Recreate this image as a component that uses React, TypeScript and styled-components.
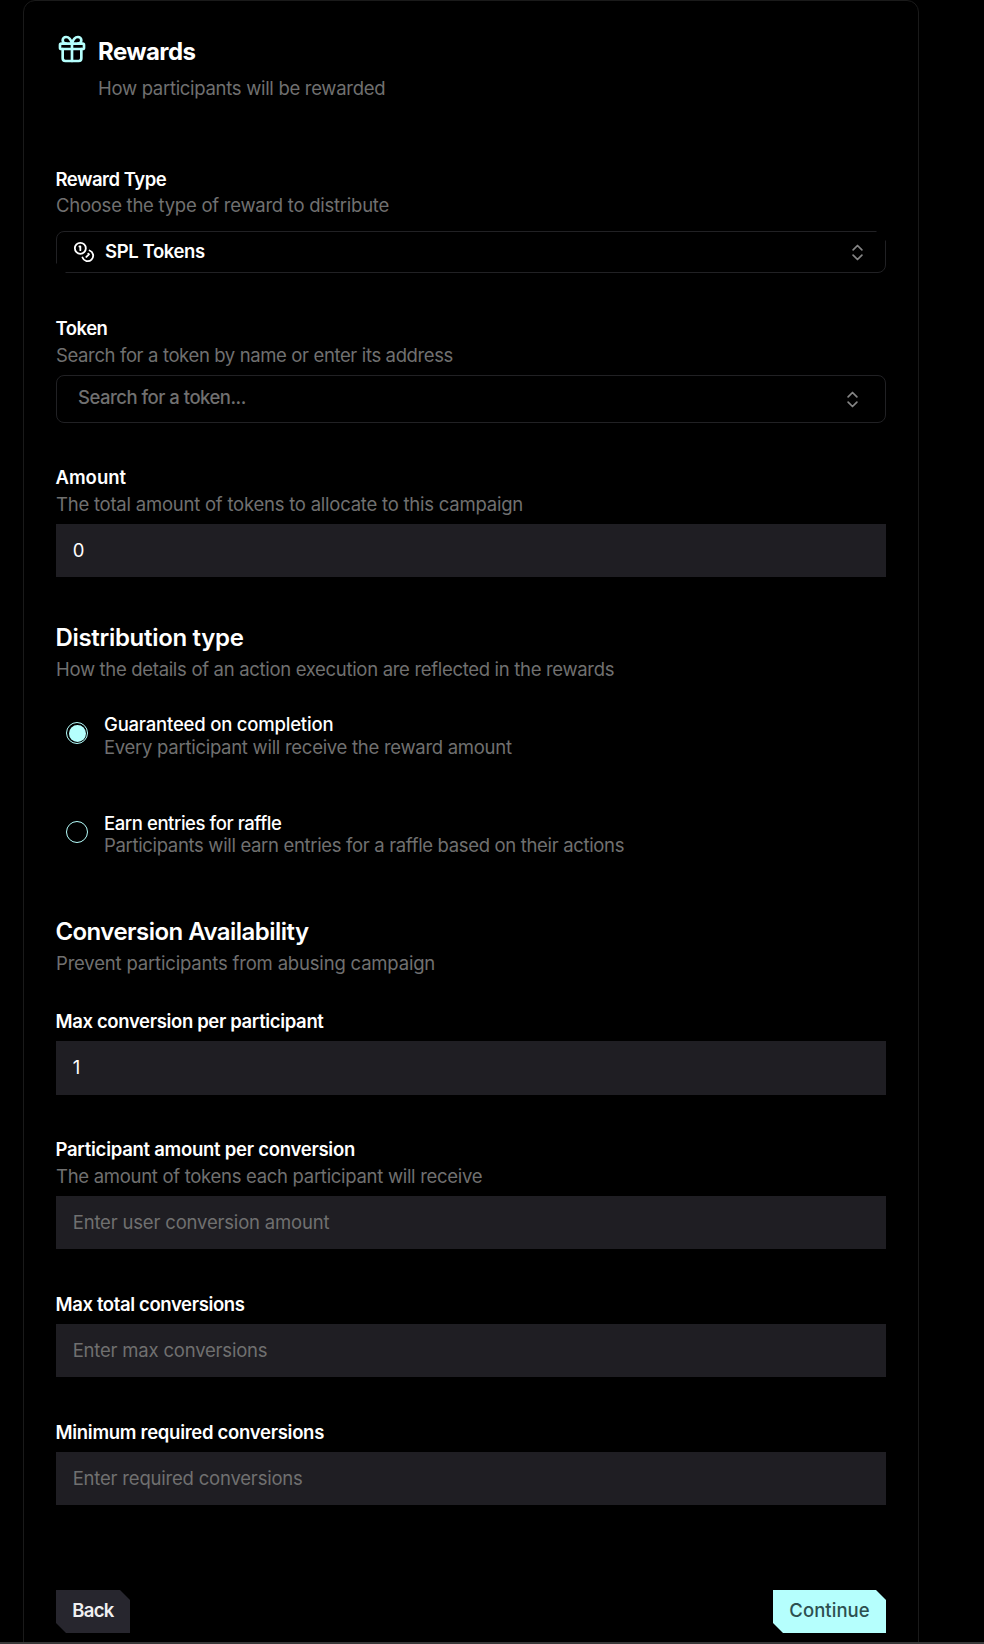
import React, { useState } from 'react';
import styled, { createGlobalStyle } from 'styled-components';
import { ChevronsUpDown, Coins, Gift } from 'lucide-react';

const GlobalStyle = createGlobalStyle`
  * { box-sizing: border-box; }
  body {
    margin: 0;
    background: #000;
    color: #fff;
    font-family: Inter, "Liberation Sans", sans-serif;
    font-size: 18.5px;
    -webkit-font-smoothing: antialiased;
  }
`;

const accent = '#b5fffd';
const muted = '#707070';
const notch = `polygon(
  0 0, calc(100% - 10px) 0, 100% 10px,
  100% 100%, 10px 100%, 0 calc(100% - 10px)
)`;

const Page = styled.div`
  height: 1644px;
  padding-left: 23px;
  overflow: hidden;
`;

const Card = styled.form`
  display: flex;
  flex-direction: column;
  width: 896px;
  height: 1668px;
  padding: 32px;
  border: 1px solid #1a1a1a;
  border-radius: 12px;
`;

const Header = styled.header`
  display: flex;
  flex-shrink: 0;
  gap: 10px;
  height: 133px;
`;

const HeaderText = styled.div`
  padding-top: 4px;
`;

const Title = styled.h1<{ $track: number }>`
  margin: 0 0 8px;
  font-size: 24px;
  line-height: 30px;
  font-weight: 700;
  letter-spacing: ${p => p.$track}px;
`;

const SectionTitle = styled.h2<{ $track: number; $gap: number }>`
  margin: 1px 0 ${p => p.$gap}px -0.6px;
  font-size: 24px;
  line-height: 30px;
  font-weight: 600;
  letter-spacing: ${p => p.$track}px;
`;

const Hint = styled.p<{ $track: number; $lh?: number }>`
  margin: 0;
  color: ${muted};
  line-height: ${p => p.$lh ?? 26}px;
  letter-spacing: ${p => p.$track}px;
  white-space: nowrap;
`;

const Group = styled.section<{ $after: number; $gap?: number }>`
  display: flex;
  flex-direction: column;
  flex-shrink: 0;
  margin-bottom: ${p => p.$after}px;

  > :last-child { margin-top: ${p => p.$gap ?? 7}px; }
`;

const Label = styled.label<{ $track: number; $h?: number }>`
  height: ${p => p.$h ?? 26}px;
  margin-left: -0.5px;
  line-height: 26px;
  font-weight: 600;
  letter-spacing: ${p => p.$track}px;
`;

const Input = styled.input<{ $track?: number; $h?: number }>`
  width: 100%;
  height: ${p => p.$h ?? 53}px;
  padding: 0 16.7px 2px;
  border: 0;
  border-radius: 0;
  outline: 0;
  background: #1f1e23;
  color: #fff;
  font: inherit;
  letter-spacing: ${p => p.$track ?? 0}px;

  &::placeholder { color: ${muted}; opacity: 1; }
`;

const SelectBox = styled.button<{ $notched?: boolean }>`
  display: flex;
  align-items: center;
  width: 100%;
  height: ${p => (p.$notched ? 42 : 48)}px;
  padding: ${p => (p.$notched ? '0 17px 0 16px' : '0 22px 0 21px')};
  border: 1px solid #212124;
  border-radius: 8px;
  background: transparent;
  color: #fff;
  font: inherit;
  clip-path: ${p => (p.$notched ? notch : 'none')};

  > svg:last-child { margin-left: auto; color: #858585; }
`;

const SelectValue = styled.span`
  padding: 0 0 2px 10px;
  font-weight: 600;
  letter-spacing: -0.39px;
`;

const SelectPlaceholder = styled.span`
  padding-bottom: 4px;
  color: ${muted};
  font-weight: 500;
  letter-spacing: -0.5px;
`;

const RadioItem = styled.label<{ $after: number }>`
  display: flex;
  flex-shrink: 0;
  gap: 16px;
  height: 44px;
  margin: 0 0 ${p => p.$after}px 10px;
`;

const RadioInput = styled.input`
  appearance: none;
  flex-shrink: 0;
  width: 22px;
  height: 22px;
  margin: 9px 0 0;
  padding: 1.5px;
  border: 1.2px solid ${accent};
  border-radius: 50%;

  &:checked { background: ${accent} content-box; }
`;

const RadioTitle = styled.div<{ $track: number }>`
  line-height: 22px;
  font-weight: 500;
  letter-spacing: ${p => p.$track}px;
`;

const Actions = styled.footer`
  display: flex;
  justify-content: space-between;
`;

const Button = styled.button<{ $primary?: boolean }>`
  width: ${p => (p.$primary ? 113 : 74)}px;
  height: 43px;
  padding: 0 0 3px;
  border: 0;
  background: ${p => (p.$primary ? accent : '#27262e')};
  color: ${p => (p.$primary ? '#2d5050' : '#f0f0f2')};
  font: inherit;
  font-weight: ${p => (p.$primary ? 500 : 600)};
  letter-spacing: ${p => (p.$primary ? 0.06 : -0.7)}px;
  clip-path: ${notch};
`;

const BottomEdge = styled.div`
  position: fixed;
  inset: auto 0 0;
  height: 2px;
  background: #383838;
`;

export default function App() {
  const [mode, setMode] = useState('guaranteed');
  const [amount, setAmount] = useState('0');
  const [perUser, setPerUser] = useState('1');

  return (
    <>
      <GlobalStyle />
      <Page>
        <Card onSubmit={e => e.preventDefault()}>
          <Header>
            <Gift size={32} color={accent} />
            <HeaderText>
              <Title $track={-0.59}>Rewards</Title>
              <Hint $track={-0.3}>How participants will be rewarded</Hint>
            </HeaderText>
          </Header>

          <Group $after={42} $gap={13}>
            <Label $track={-0.5}>Reward Type</Label>
            <Hint $track={-0.255}>Choose the type of reward to distribute</Hint>
            <SelectBox type="button" $notched>
              <Coins size={22} />
              <SelectValue>SPL Tokens</SelectValue>
              <ChevronsUpDown size={21} />
            </SelectBox>
          </Group>

          <Group $after={41}>
            <Label $track={-0.5} $h={27}>Token</Label>
            <Hint $track={-0.374}>Search for a token by name or enter its address</Hint>
            <SelectBox type="button">
              <SelectPlaceholder>Search for a token...</SelectPlaceholder>
              <ChevronsUpDown size={21} />
            </SelectBox>
          </Group>

          <Group $after={45}>
            <Label $track={0} $h={27} htmlFor="amount">Amount</Label>
            <Hint $track={-0.23}>The total amount of tokens to allocate to this campaign</Hint>
            <Input id="amount" value={amount} onChange={e => setAmount(e.target.value)} />
          </Group>

          <Group $after={31} $gap={0}>
            <SectionTitle $track={-0.3} $gap={3}>Distribution type</SectionTitle>
            <Hint $track={-0.314}>How the details of an action execution are reflected in the rewards</Hint>
          </Group>

          <RadioItem $after={55}>
            <RadioInput
              type="radio"
              name="mode"
              checked={mode === 'guaranteed'}
              onChange={() => setMode('guaranteed')}
            />
            <div>
              <RadioTitle $track={-0.2}>Guaranteed on completion</RadioTitle>
              <Hint $track={-0.28} $lh={24}>Every participant will receive the reward amount</Hint>
            </div>
          </RadioItem>
          <RadioItem $after={60}>
            <RadioInput
              type="radio"
              name="mode"
              checked={mode === 'raffle'}
              onChange={() => setMode('raffle')}
            />
            <div>
              <RadioTitle $track={-0.433}>Earn entries for raffle</RadioTitle>
              <Hint $track={-0.337} $lh={22}>Participants will earn entries for a raffle based on their actions</Hint>
            </div>
          </RadioItem>

          <Group $after={32} $gap={0}>
            <SectionTitle $track={-0.54} $gap={3}>Conversion Availability</SectionTitle>
            <Hint $track={-0.18}>Prevent participants from abusing campaign</Hint>
          </Group>

          <Group $after={41}>
            <Label $track={-0.355} htmlFor="perUser">Max conversion per participant</Label>
            <Input id="perUser" $h={54} value={perUser} onChange={e => setPerUser(e.target.value)} />
          </Group>

          <Group $after={42}>
            <Label $track={-0.265} $h={27} htmlFor="perConversion">Participant amount per conversion</Label>
            <Hint $track={-0.295}>The amount of tokens each participant will receive</Hint>
            <Input id="perConversion" $track={-0.18} placeholder="Enter user conversion amount" />
          </Group>

          <Group $after={42}>
            <Label $track={-0.37} htmlFor="maxTotal">Max total conversions</Label>
            <Input id="maxTotal" $track={-0.2} placeholder="Enter max conversions" />
          </Group>

          <Group $after={85}>
            <Label $track={-0.29} htmlFor="minRequired">Minimum required conversions</Label>
            <Input id="minRequired" $track={-0.2} placeholder="Enter required conversions" />
          </Group>

          <Actions>
            <Button type="button">Back</Button>
            <Button type="submit" $primary>Continue</Button>
          </Actions>
        </Card>
      </Page>
      <BottomEdge />
    </>
  );
}
